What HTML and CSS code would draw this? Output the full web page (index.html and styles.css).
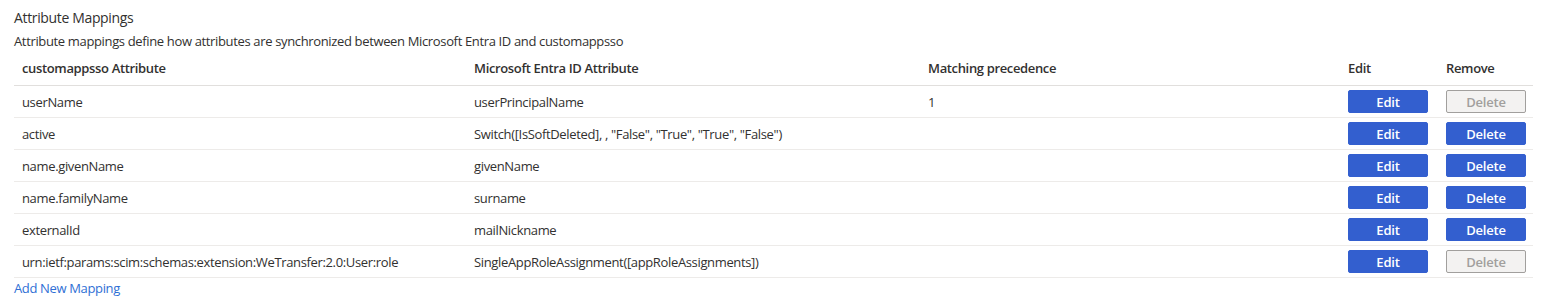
FILE: index.html
```html
<!DOCTYPE html>
<html lang="en">
<head>
<meta charset="UTF-8">
<title>Attribute Mappings</title>
<link rel="stylesheet" href="styles.css">
</head>
<body>
<div class="section">
<h2 class="title">Attribute Mappings</h2>
<p class="desc">Attribute mappings define how attributes are synchronized between Microsoft Entra ID and customappsso</p>
<table class="mappings">
<colgroup>
<col class="c-target">
<col class="c-source">
<col class="c-prec">
<col class="c-edit">
<col class="c-remove">
</colgroup>
<thead>
<tr>
<th>customappsso Attribute</th>
<th>Microsoft Entra ID Attribute</th>
<th>Matching precedence</th>
<th>Edit</th>
<th>Remove</th>
</tr>
</thead>
<tbody>
<tr>
<td>userName</td>
<td>userPrincipalName</td>
<td>1</td>
<td><button class="btn">Edit</button></td>
<td><button class="btn" disabled>Delete</button></td>
</tr>
<tr>
<td>active</td>
<td>Switch([IsSoftDeleted], , "False", "True", "True", "False")</td>
<td></td>
<td><button class="btn">Edit</button></td>
<td><button class="btn">Delete</button></td>
</tr>
<tr>
<td>name.givenName</td>
<td>givenName</td>
<td></td>
<td><button class="btn">Edit</button></td>
<td><button class="btn">Delete</button></td>
</tr>
<tr>
<td>name.familyName</td>
<td>surname</td>
<td></td>
<td><button class="btn">Edit</button></td>
<td><button class="btn">Delete</button></td>
</tr>
<tr>
<td>externalId</td>
<td>mailNickname</td>
<td></td>
<td><button class="btn">Edit</button></td>
<td><button class="btn">Delete</button></td>
</tr>
<tr>
<td>urn:ietf:params:scim:schemas:extension:WeTransfer:2.0:User:role</td>
<td>SingleAppRoleAssignment([appRoleAssignments])</td>
<td></td>
<td><button class="btn">Edit</button></td>
<td><button class="btn" disabled>Delete</button></td>
</tr>
</tbody>
</table>
<a class="add-link" href="#">Add New Mapping</a>
</div>
</body>
</html>
```

FILE: styles.css
```css
body {
font-family: "Segoe UI", "Open Sans", sans-serif;
font-size: 13px;
letter-spacing: -0.35px;
color: #323130;
background: #fff;
margin: 0;
}

.section {
padding: 8px 14px 0 14px;
}

.title {
font-size: 14px;
font-weight: 400;
margin: 0;
line-height: 19px;
}

.desc {
margin: 5px 0 0 0;
line-height: 18px;
}

.mappings {
width: 1519px;
border-collapse: collapse;
table-layout: fixed;
margin-top: 3px;
}

.c-target { width: 452px; }
.c-source { width: 454px; }
.c-prec { width: 420px; }
.c-edit { width: 98px; }
.c-remove { width: 95px; }

.mappings th {
text-align: left;
font-weight: 600;
height: 30px;
padding: 0 8px 2px 8px;
border-bottom: 1px solid #e1dfdd;
}

.mappings td {
height: 31px;
padding: 0 8px;
border-bottom: 1px solid #edebe9;
white-space: nowrap;
}

.btn {
display: block;
width: 80px;
height: 23px;
border: 1px solid #335fcf;
border-radius: 2px;
background: #335fcf;
color: #fff;
font-family: inherit;
font-size: 13px;
font-weight: 600;
letter-spacing: -0.2px;
padding: 0;
cursor: pointer;
}

.btn:disabled {
background: #f3f2f1;
border-color: #a19f9d;
color: #a19f9d;
cursor: default;
}

.add-link {
display: inline-block;
margin-top: 1px;
color: #2f6fd5;
text-decoration: none;
}
```
